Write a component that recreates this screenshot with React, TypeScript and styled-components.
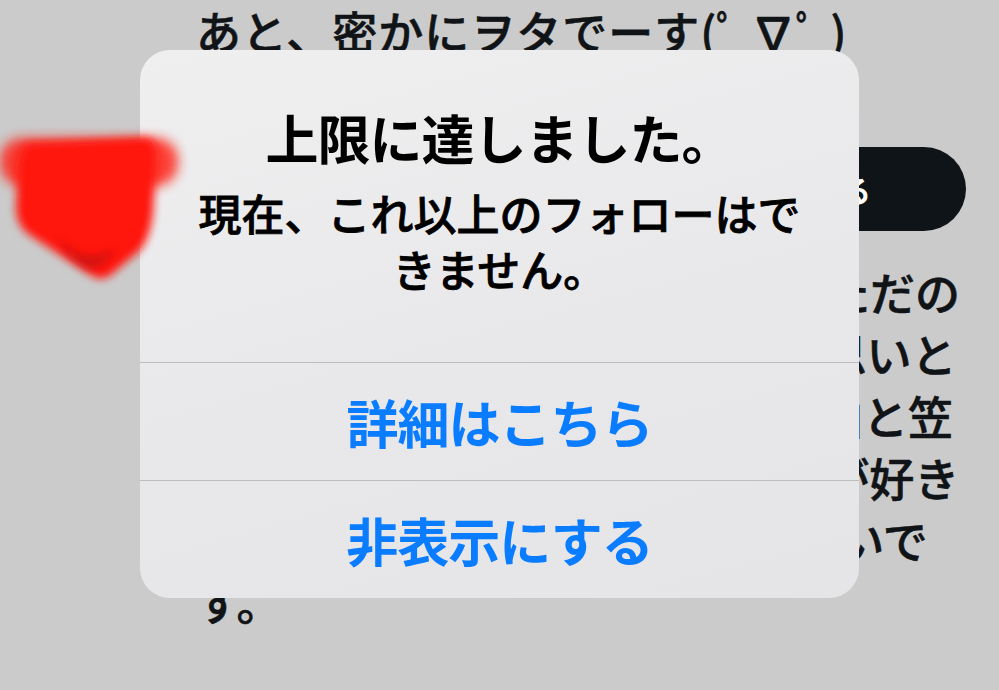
import React from 'react'
import styled, { createGlobalStyle } from 'styled-components'

const GlobalStyle = createGlobalStyle`
  html, body {
    margin: 0;
    padding: 0;
    background: #cbcbcb;
  }
  body {
    font-family: 'Noto Sans CJK JP', 'Noto Sans', sans-serif;
    overflow: hidden;
  }
`

const Screen = styled.div`
  position: relative;
  width: 999px;
  height: 690px;
  overflow: hidden;
  background: #cbcbcb;
`

// profile page behind the dimmed overlay
const Profile = styled.div`
  width: 780px;
  padding-left: 196px;
  display: flex;
  flex-direction: column;
  color: #111417;
  font-size: 45px;
  line-height: 62px;
  font-weight: 500;
  -webkit-text-stroke: 0.6px #111417;
`

const TextLine = styled.div<{ $wide?: boolean }>`
  white-space: nowrap;
  letter-spacing: ${p => (p.$wide ? '1px' : '0')};
`

const ActionRow = styled.div`
  display: flex;
  justify-content: flex-end;
  margin: 85px 10px 30px 0;
`

const FollowButton = styled.div`
  width: 370px;
  height: 84px;
  border-radius: 42px;
  background: #0f1419;
  color: #fff;
  display: flex;
  align-items: center;
  justify-content: center;
  font-size: 30px;
  font-weight: 700;
  -webkit-text-stroke: 0;
`

const Bio = styled.div`
  display: flex;
  flex-direction: column;
`

// alert sheet
const Alert = styled.div`
  position: absolute;
  left: 140px;
  top: 50px;
  width: 719px;
  border-radius: 30px;
  overflow: hidden;
  background: linear-gradient(165deg, #efeff0 0%, #e8e8ea 55%, #e5e5e7 100%);
  display: flex;
  flex-direction: column;
`

const AlertBody = styled.div`
  padding: 56px 48px 66px;
  display: flex;
  flex-direction: column;
  align-items: center;
  gap: 16px;
  text-align: center;
  color: #000;
`

const AlertTitle = styled.div`
  font-size: 53px;
  line-height: 62px;
  font-weight: 700;
  letter-spacing: -1px;
`

const AlertMessage = styled.div`
  font-size: 43px;
  line-height: 56px;
  font-weight: 500;
  -webkit-text-stroke: 0.8px #000;
`

const AlertAction = styled.div`
  height: 117px;
  border-top: 1px solid #bdbdc0;
  display: flex;
  align-items: center;
  justify-content: center;
  font-size: 52px;
  font-weight: 600;
  letter-spacing: -1px;
  color: #0a7cff;
`

// hand-drawn red scribble hiding the avatar
const Scribble = styled.svg`
  position: absolute;
  left: 0;
  top: 100px;
  width: 200px;
  height: 200px;
  pointer-events: none;
`

const bioLines = [
  'アニメと声優さんが大好きな、ただの',
  'オタクです。作品への熱い熱い思いと',
  '好きな曲を語ったりしてます。曲と笠',
  '原さんのこと、一緒に語れる方が好き',
  'です!気軽に絡んでくれると嬉しいで',
  'す。',
]

export default function App() {
  return (
    <Screen>
      <GlobalStyle />
      <Profile>
        <TextLine $wide>あと、密かにヲタでーす(ﾟ ∇ﾟ )</TextLine>
        <ActionRow>
          <FollowButton>フォローする</FollowButton>
        </ActionRow>
        <Bio>
          {bioLines.map((line, i) => (
            <TextLine key={i}>{line}</TextLine>
          ))}
        </Bio>
      </Profile>

      <Alert>
        <AlertBody>
          <AlertTitle>上限に達しました。</AlertTitle>
          <AlertMessage>現在、これ以上のフォローはできません。</AlertMessage>
        </AlertBody>
        <AlertAction>詳細はこちら</AlertAction>
        <AlertAction>非表示にする</AlertAction>
      </Alert>

      <Scribble viewBox="0 0 200 200">
        <defs>
          <filter id="soft" x="-20%" y="-20%" width="140%" height="140%">
            <feGaussianBlur stdDeviation="4" />
          </filter>
          <filter id="softer" x="-20%" y="-40%" width="140%" height="180%">
            <feGaussianBlur stdDeviation="6" />
          </filter>
        </defs>
        <rect x="0" y="38" width="178" height="48" rx="22" fill="#ff2418" opacity="0.85" filter="url(#softer)" />
        <path
          d="M28 44 L146 38 Q158 40 156 62 L153 112 Q150 140 138 152 L112 174 Q102 182 92 176 L28 134 Q16 124 16 108 L18 70 Q20 48 28 44 Z"
          fill="#ff1208"
          filter="url(#soft)"
        />
        <path d="M58 138 Q86 168 116 148 Q104 170 86 168 Q70 162 58 138 Z" fill="#a50d14" opacity="0.5" filter="url(#soft)" />
      </Scribble>
    </Screen>
  )
}
